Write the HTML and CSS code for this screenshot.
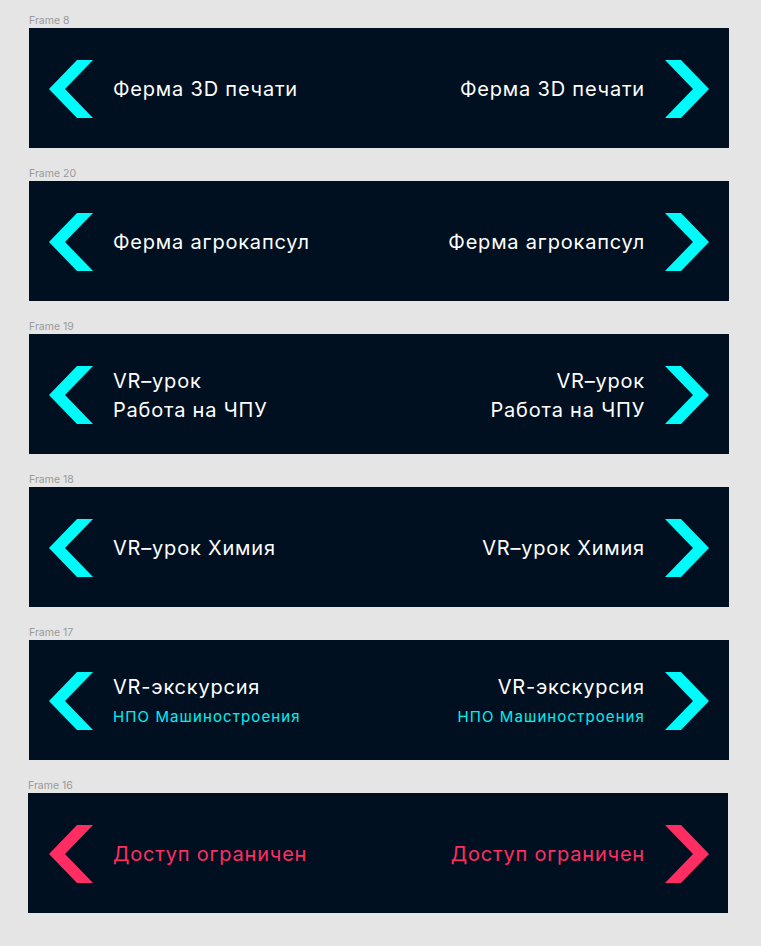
FILE: index.html
```html
<!DOCTYPE html>
<html lang="ru">
<head>
<meta charset="utf-8">
<title>Frames</title>
<link rel="stylesheet" href="styles.css">
</head>
<body>
<div class="page">

  <section class="frame">
    <div class="frame-label">Frame 8</div>
    <div class="banner">
      <div class="side">
        <svg class="chev" viewBox="0 0 44 58"><polygon points="28,0 44,0 16,29 44,58 28,58 0,29"/></svg>
        <div class="text"><div class="title">Ферма 3D печати</div></div>
      </div>
      <div class="side side-right">
        <div class="text"><div class="title">Ферма 3D печати</div></div>
        <svg class="chev" viewBox="0 0 44 58"><polygon points="16,0 0,0 28,29 0,58 16,58 44,29"/></svg>
      </div>
    </div>
  </section>

  <section class="frame">
    <div class="frame-label">Frame 20</div>
    <div class="banner">
      <div class="side">
        <svg class="chev" viewBox="0 0 44 58"><polygon points="28,0 44,0 16,29 44,58 28,58 0,29"/></svg>
        <div class="text"><div class="title">Ферма агрокапсул</div></div>
      </div>
      <div class="side side-right">
        <div class="text"><div class="title">Ферма агрокапсул</div></div>
        <svg class="chev" viewBox="0 0 44 58"><polygon points="16,0 0,0 28,29 0,58 16,58 44,29"/></svg>
      </div>
    </div>
  </section>

  <section class="frame">
    <div class="frame-label">Frame 19</div>
    <div class="banner">
      <div class="side">
        <svg class="chev" viewBox="0 0 44 58"><polygon points="28,0 44,0 16,29 44,58 28,58 0,29"/></svg>
        <div class="text"><div class="title title-multi">VR–урок<br>Работа на ЧПУ</div></div>
      </div>
      <div class="side side-right">
        <div class="text"><div class="title title-multi">VR–урок<br>Работа на ЧПУ</div></div>
        <svg class="chev" viewBox="0 0 44 58"><polygon points="16,0 0,0 28,29 0,58 16,58 44,29"/></svg>
      </div>
    </div>
  </section>

  <section class="frame">
    <div class="frame-label">Frame 18</div>
    <div class="banner">
      <div class="side">
        <svg class="chev" viewBox="0 0 44 58"><polygon points="28,0 44,0 16,29 44,58 28,58 0,29"/></svg>
        <div class="text"><div class="title">VR–урок Химия</div></div>
      </div>
      <div class="side side-right">
        <div class="text"><div class="title">VR–урок Химия</div></div>
        <svg class="chev" viewBox="0 0 44 58"><polygon points="16,0 0,0 28,29 0,58 16,58 44,29"/></svg>
      </div>
    </div>
  </section>

  <section class="frame">
    <div class="frame-label">Frame 17</div>
    <div class="banner">
      <div class="side">
        <svg class="chev" viewBox="0 0 44 58"><polygon points="28,0 44,0 16,29 44,58 28,58 0,29"/></svg>
        <div class="text text-sub"><div class="title">VR-экскурсия</div><div class="subtitle">НПО Машиностроения</div></div>
      </div>
      <div class="side side-right">
        <div class="text text-sub"><div class="title">VR-экскурсия</div><div class="subtitle">НПО Машиностроения</div></div>
        <svg class="chev" viewBox="0 0 44 58"><polygon points="16,0 0,0 28,29 0,58 16,58 44,29"/></svg>
      </div>
    </div>
  </section>

  <section class="frame frame-shift">
    <div class="frame-label">Frame 16</div>
    <div class="banner banner-locked">
      <div class="side">
        <svg class="chev" viewBox="0 0 44 58"><polygon points="28,0 44,0 16,29 44,58 28,58 0,29"/></svg>
        <div class="text"><div class="title">Доступ ограничен</div></div>
      </div>
      <div class="side side-right">
        <div class="text"><div class="title">Доступ ограничен</div></div>
        <svg class="chev" viewBox="0 0 44 58"><polygon points="16,0 0,0 28,29 0,58 16,58 44,29"/></svg>
      </div>
    </div>
  </section>

</div>
</body>
</html>
```

FILE: styles.css
```css
html, body {
  margin: 0;
  padding: 0;
  background: #e5e5e5;
}

.page {
  padding: 13px 0 0 29px;
  display: flex;
  flex-direction: column;
  gap: 18px;
}

.frame-shift {
  margin-left: -1px;
}

.frame-shift .banner {
  padding: 0 19px 0 21px;
}

.frame-label {
  font-family: Inter, "Liberation Sans", sans-serif;
  font-size: 10.5px;
  line-height: 15px;
  height: 15px;
  color: #9a9a9a;
}

.banner {
  width: 700px;
  height: 120px;
  box-sizing: border-box;
  background: #001020;
  padding: 0 20px;
  display: flex;
  justify-content: space-between;
  align-items: center;
  color: #ffffff;
  font-family: Inter, "Noto Sans", sans-serif;
}

.side {
  display: flex;
  align-items: center;
  gap: 20px;
}

.side-right {
  text-align: right;
  gap: 20px;
}

.chev {
  width: 44px;
  height: 58px;
  margin-top: 2px;
  display: block;
  fill: #00fbfb;
}

.text {
  padding-top: 2px;
}

.text.text-sub {
  padding-top: 0;
}

.title {
  font-size: 20px;
  line-height: 29px;
  font-weight: 400;
  letter-spacing: 0.8px;
}

.text-sub .title {
  line-height: 26px;
}

.title-multi {
  line-height: 29px;
  padding-top: 2px;
}

.subtitle {
  font-size: 15px;
  line-height: 18px;
  margin-top: 8px;
  letter-spacing: 1.1px;
  color: #00f0f0;
}

.banner-locked .chev {
  fill: #ff2d62;
}

.banner-locked .title {
  color: #ff2d62;
}
```
